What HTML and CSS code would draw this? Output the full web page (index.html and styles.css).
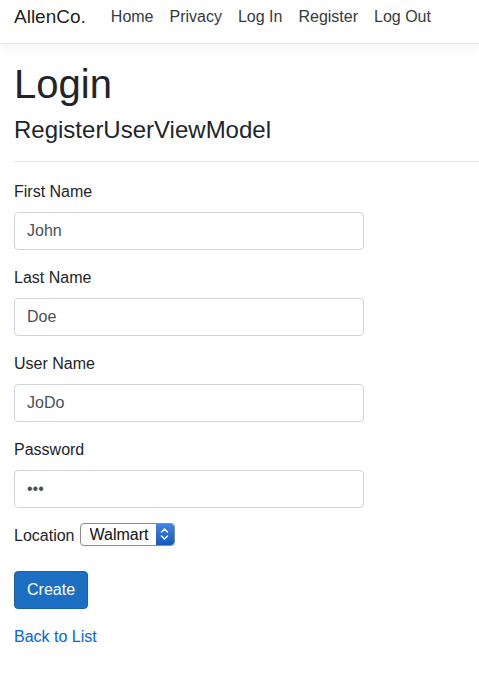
FILE: index.html
```html
<!DOCTYPE html>
<html lang="en">
<head>
<meta charset="utf-8">
<title>Login - AllenCo.</title>
<link rel="stylesheet" href="styles.css">
</head>
<body>
<header class="navbar">
  <a class="brand" href="#">AllenCo.</a>
  <nav class="nav">
    <a class="nav-link" href="#">Home</a>
    <a class="nav-link" href="#">Privacy</a>
    <a class="nav-link" href="#">Log In</a>
    <a class="nav-link" href="#">Register</a>
    <a class="nav-link" href="#">Log Out</a>
  </nav>
</header>
<main class="container">
  <h1 class="title">Login</h1>
  <h4 class="subtitle">RegisterUserViewModel</h4>
  <hr class="rule">
  <form class="form">
    <div class="form-group">
      <label class="label" for="fn">First Name</label>
      <input class="form-control" id="fn" type="text" value="John">
    </div>
    <div class="form-group">
      <label class="label" for="ln">Last Name</label>
      <input class="form-control" id="ln" type="text" value="Doe">
    </div>
    <div class="form-group">
      <label class="label" for="un">User Name</label>
      <input class="form-control" id="un" type="text" value="JoDo">
    </div>
    <div class="form-group">
      <label class="label" for="pw">Password</label>
      <input class="form-control" id="pw" type="password" value="abc">
    </div>
    <div class="form-group inline-group">
      <label class="label inline-label" for="loc">Location</label>
      <span class="select-wrap">
        <select class="select" id="loc">
          <option>Walmart</option>
        </select>
        <span class="select-arrow">
          <svg width="9" height="14" viewBox="0 0 9 14" fill="none" stroke="#ffffff" stroke-width="1.5" stroke-linecap="round" stroke-linejoin="round"><path d="M1.5 5 L4.5 2 L7.5 5"/><path d="M1.5 9 L4.5 12 L7.5 9"/></svg>
        </span>
      </span>
    </div>
    <div class="form-group">
      <button class="btn" type="button">Create</button>
    </div>
  </form>
  <div class="back">
    <a class="link" href="#">Back to List</a>
  </div>
</main>
</body>
</html>
```

FILE: styles.css
```css
html, body {
  margin: 0;
  padding: 0;
}
body {
  font-family: "Liberation Sans", Arial, Helvetica, sans-serif;
  font-size: 16px;
  line-height: 1.5;
  color: #212529;
  background: #ffffff;
}
.navbar {
  display: flex;
  align-items: center;
  height: 34px;
  padding: 0 14px 9px 14px;
  border-bottom: 1px solid #e5e5e5;
  box-shadow: 0 4px 12px rgba(0, 0, 0, 0.05);
  margin-bottom: 16px;
}
.brand {
  font-size: 19px;
  color: rgba(0, 0, 0, 0.9);
  text-decoration: none;
  margin-right: 17px;
  line-height: 1.2;
}
.nav {
  display: flex;
}
.nav-link {
  color: #343a40;
  text-decoration: none;
  padding: 0 8px;
  line-height: 1.2;
}
.container {
  padding: 0 14px;
}
.title {
  font-size: 40px;
  font-weight: 500;
  line-height: 1.2;
  margin: 0 0 8px 0;
}
.subtitle {
  font-size: 24px;
  font-weight: 500;
  line-height: 1.2;
  margin: 0 0 8px 0;
}
.rule {
  border: 0;
  border-top: 1px solid rgba(0, 0, 0, 0.1);
  margin: 16px -14px 16px 0;
}
.form {
  padding-top: 2px;
}
.form-group {
  margin-bottom: 16px;
}
.label {
  display: inline-block;
  margin-bottom: 8px;
}
.form-control {
  display: block;
  box-sizing: border-box;
  width: 350px;
  height: 38px;
  padding: 6px 12px;
  font-family: inherit;
  font-size: 16px;
  line-height: 1.5;
  color: #495057;
  background: #ffffff;
  border: 1px solid #ced4da;
  border-radius: 4px;
  margin: 0;
}
.inline-group {
  display: flex;
  align-items: flex-start;
}
.inline-label {
  margin-bottom: 7px;
  margin-right: 5px;
}
.select-wrap {
  display: inline-flex;
  box-sizing: border-box;
  height: 23px;
  margin-top: -1px;
  width: 95px;
  border: 1px solid #8c8c8c;
  border-radius: 4px;
  overflow: hidden;
  background: #ffffff;
}
.select {
  appearance: none;
  -webkit-appearance: none;
  flex: 1;
  min-width: 0;
  border: 0;
  background: transparent;
  font-family: inherit;
  font-size: 16px;
  line-height: 21px;
  height: 21px;
  padding: 0 0 0 9px;
  color: #111111;
  margin: 0;
  outline: none;
}
.select-arrow {
  width: 18px;
  display: flex;
  align-items: center;
  justify-content: center;
  background: linear-gradient(#3f86e0, #1559c0);
}
.btn {
  font-family: inherit;
  font-size: 16px;
  line-height: 1.5;
  color: #ffffff;
  background: #1b6ec2;
  border: 1px solid #1861ac;
  border-radius: 4px;
  padding: 6px 12px;
  margin: 0;
}
.link {
  color: #0366d6;
  text-decoration: none;
}
```
